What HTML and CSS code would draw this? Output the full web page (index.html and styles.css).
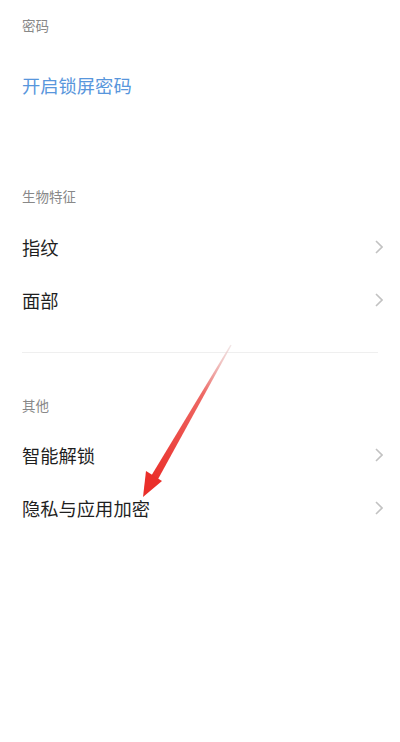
FILE: index.html
```html
<!DOCTYPE html>
<html lang="zh-CN">
<head>
<meta charset="utf-8">
<title>锁屏与密码</title>
<link rel="stylesheet" href="styles.css">
</head>
<body>
<div class="page">
  <div class="header header-first">密码</div>
  <div class="row"><span class="label label-link">开启锁屏密码</span></div>

  <div class="header header-second">生物特征</div>
  <div class="row"><span class="label">指纹</span><svg class="chev" viewBox="0 0 8 14"><path d="M1 1 L7 7 L1 13"/></svg></div>
  <div class="row"><span class="label">面部</span><svg class="chev" viewBox="0 0 8 14"><path d="M1 1 L7 7 L1 13"/></svg></div>

  <div class="divider"></div>

  <div class="header header-third">其他</div>
  <div class="row"><span class="label">智能解锁</span><svg class="chev" viewBox="0 0 8 14"><path d="M1 1 L7 7 L1 13"/></svg></div>
  <div class="row"><span class="label">隐私与应用加密</span><svg class="chev" viewBox="0 0 8 14"><path d="M1 1 L7 7 L1 13"/></svg></div>

  <svg class="arrow" viewBox="0 0 400 742" width="400" height="742">
    <defs>
      <linearGradient id="g" x1="231" y1="345" x2="150" y2="480" gradientUnits="userSpaceOnUse">
        <stop offset="0" stop-color="#e9d6d6" stop-opacity="0.6"/>
        <stop offset="0.35" stop-color="#ee6a66"/>
        <stop offset="1" stop-color="#ea2f2a"/>
      </linearGradient>
    </defs>
    <polygon points="230.4,344.7 231.6,345.3 157,481 150.5,477" fill="url(#g)"/>
    <polygon points="143,497 146,471 162,481" fill="#ea2f2a"/>
  </svg>
</div>
</body>
</html>
```
FILE: styles.css
```css
html, body {
  margin: 0;
  padding: 0;
  background: #ffffff;
}
body {
  font-family: "Noto Sans CJK SC", "Noto Sans", sans-serif;
}
.page {
  position: relative;
  width: 400px;
  height: 742px;
  overflow: hidden;
}
.header {
  padding: 0 22px;
  font-size: 13.5px;
  line-height: 18px;
  color: #888888;
}
.header-first {
  padding-top: 16px;
  padding-bottom: 24px;
}
.header-second {
  padding-top: 75px;
  padding-bottom: 15px;
}
.header-third {
  padding-top: 43px;
  padding-bottom: 14px;
}
.row {
  height: 53px;
  display: flex;
  align-items: center;
  justify-content: space-between;
  padding: 0 17px 0 22px;
}
.header-first + .row {
  height: 54px;
}
.label {
  font-size: 18.3px;
  line-height: 24px;
  font-weight: 400;
  color: #1f1f1f;
}
.label-link {
  color: #5896dc;
}
.chev {
  width: 8px;
  height: 14px;
  fill: none;
  stroke: #c2c2c2;
  stroke-width: 1.6;
}
.divider {
  margin: 26px 22px 0;
  height: 1px;
  background: #efefef;
}
.arrow {
  position: absolute;
  left: 0;
  top: 0;
  pointer-events: none;
}
```
